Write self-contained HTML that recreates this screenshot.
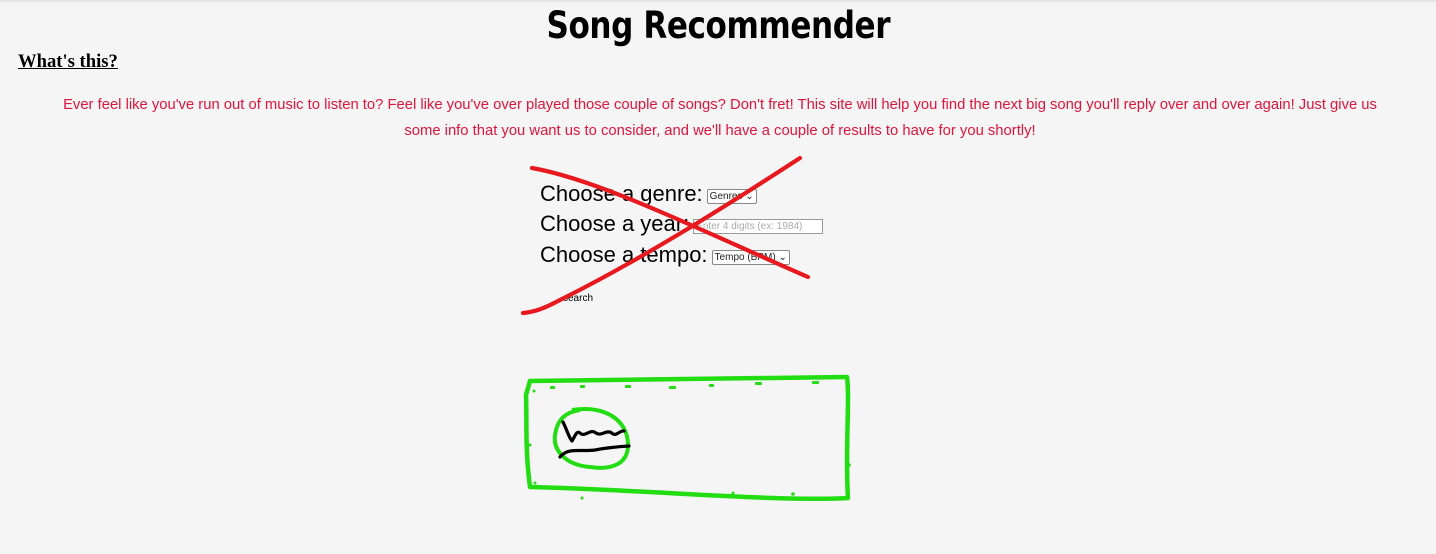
<!DOCTYPE html>
<html><head><meta charset="utf-8"><style>
html,body{margin:0;padding:0;}
body{width:1436px;height:554px;background:#f5f5f5;position:relative;overflow:hidden;font-family:"Liberation Sans",sans-serif;}
.topline{position:absolute;left:0;top:0;width:1436px;height:2px;background:#e4e4e4;}
h1{position:absolute;left:0;width:1436px;top:4px;margin:0;text-align:center;font-family:"DejaVu Sans",sans-serif;font-weight:bold;font-size:37px;letter-spacing:-0.5px;color:#000;transform:scaleX(0.84);transform-origin:720px 0;}
.what{position:absolute;left:18px;top:51px;font-family:"Liberation Serif",serif;font-weight:bold;font-size:19px;text-decoration:underline;color:#000;transform:scaleX(0.98);transform-origin:0 0;}
.desc{position:absolute;left:50px;width:1340px;top:92px;text-align:center;color:#e0143c;font-size:14.8px;line-height:26px;}
.lbl{position:absolute;left:540px;font-size:22px;color:#000;white-space:nowrap;}
.sel{display:inline-block;margin-left:4px;border:1px solid #888;background:#fff;font-size:10px;color:#222;height:13px;line-height:13px;padding:0 2px;vertical-align:2px;border-radius:2px;}
.inp{display:inline-block;margin-left:4px;border:1px solid #999;background:#fff;font-size:10px;color:#aaa;height:13px;line-height:13px;padding:0 2px;vertical-align:2px;width:124px;}
.search{position:absolute;left:563px;top:293px;font-size:10px;color:#000;}
svg{position:absolute;left:0;top:0;}
</style></head><body>
<div class="topline"></div>
<h1>Song Recommender</h1>
<div class="what">What's this?</div>
<div class="desc">Ever feel like you've run out of music to listen to? Feel like you've over played those couple of songs? Don't fret! This site will help you find the next big song you'll reply over and over again! Just give us some info that you want us to consider, and we'll have a couple of results to have for you shortly!</div>
<div class="lbl" style="top:181px">Choose a genre:<span class="sel">Genres &#8964;</span></div>
<div class="lbl" style="top:211px">Choose a year:<span class="inp">Enter 4 digits (ex: 1984)</span></div>
<div class="lbl" style="top:242px">Choose a tempo:<span class="sel">Tempo (BPM) &#8964;</span></div>
<div class="search">search</div>
<svg width="1436" height="554">
<path d="M532 168 C 600 180, 700 230, 808 277" stroke="#e8191e" stroke-width="4.2" fill="none" stroke-linecap="round"/>
<path d="M800 158 C 720 210, 640 260, 560 300 C 545 308, 535 312, 523 313" stroke="#e8191e" stroke-width="4.2" fill="none" stroke-linecap="round"/>
<path d="M530 381 C 600 380, 700 378, 847 377 C 850 400, 845 450, 848 498 C 780 502, 650 490, 530 487 C 525 450, 527 420, 526 395 Z" stroke="#22dd11" stroke-width="4.5" fill="none" stroke-linejoin="round"/>
<path d="M572 410 C 605 405, 628 420, 628 445 C 628 465, 610 470, 590 467 C 565 465, 553 450, 555 435 C 557 420, 565 412, 580 410" stroke="#22dd11" stroke-width="4" fill="none"/>
<path d="M563 422 C 567 430, 569 438, 572 441 C 575 436, 577 430, 580 433 C 585 438, 590 428, 596 433 C 602 437, 607 428, 613 434 C 617 436, 620 430, 624 431" stroke="#000" stroke-width="3.2" fill="none" stroke-linecap="round" stroke-linejoin="round"/>
<path d="M560 457 C 568 447, 580 452, 595 450 C 605 448, 612 447, 629 446" stroke="#000" stroke-width="3.2" fill="none" stroke-linecap="round"/>
<g fill="#22dd11">
<rect x="550" y="386" width="5" height="3" rx="1"/><rect x="580" y="385" width="5" height="3" rx="1"/><rect x="625" y="385" width="6" height="3" rx="1"/><rect x="669" y="386" width="7" height="3" rx="1"/><rect x="709" y="384" width="5" height="3" rx="1"/><rect x="755" y="382" width="7" height="3" rx="1"/><rect x="812" y="381" width="7" height="3" rx="1"/>
<circle cx="534" cy="391" r="1.5"/><circle cx="530" cy="445" r="1.5"/><circle cx="535" cy="483" r="1.5"/><circle cx="582" cy="498" r="1.5"/><rect x="671" y="492" width="8" height="3"/><circle cx="733" cy="493" r="1.5"/><circle cx="793" cy="494" r="1.8"/><circle cx="847" cy="440" r="1.5"/><circle cx="849" cy="465" r="1.8"/>
</g>
</svg>
</body></html>
